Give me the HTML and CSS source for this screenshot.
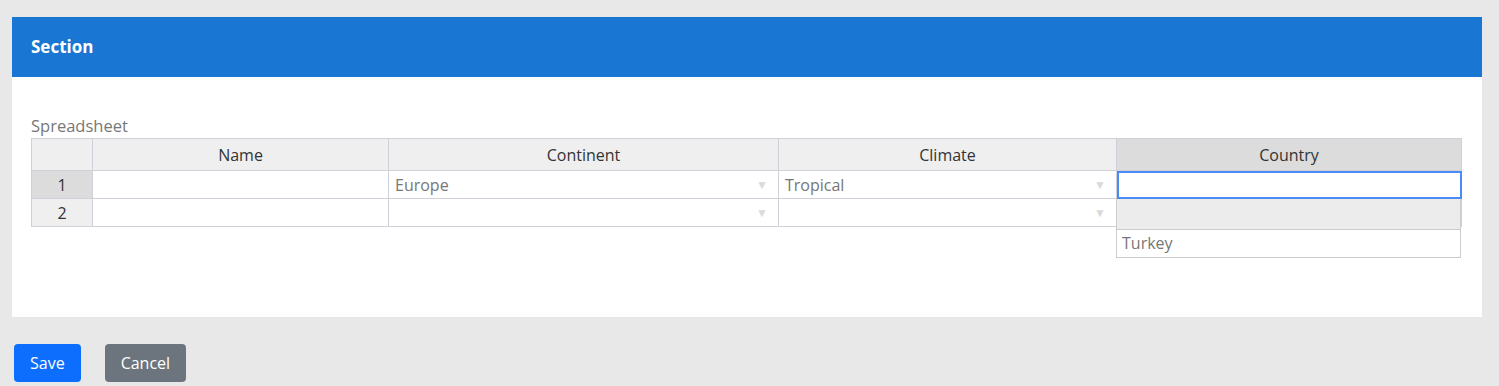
FILE: index.html
```html
<!DOCTYPE html>
<html lang="en">
<head>
  <meta charset="UTF-8">
  <meta name="viewport" content="width=device-width, initial-scale=1.0">
  <title>Section</title>
  <link rel="stylesheet" href="styles.css">
</head>
<body>
  <div class="card">
    <div class="card-header">Section</div>
    <div class="card-body">
      <div class="field-label">Spreadsheet</div>
      <table class="sheet">
        <colgroup>
          <col style="width: 61px">
          <col style="width: 296px">
          <col style="width: 390px">
          <col style="width: 338px">
          <col style="width: 345px">
        </colgroup>
        <thead>
          <tr>
            <th class="corner"></th>
            <th>Name</th>
            <th>Continent</th>
            <th>Climate</th>
            <th class="active">Country</th>
          </tr>
        </thead>
        <tbody>
          <tr>
            <td class="row-head active">1</td>
            <td></td>
            <td class="dropdown">Europe<span class="arrow">▼</span></td>
            <td class="dropdown">Tropical<span class="arrow">▼</span></td>
            <td class="selected">
              <div class="editor-list">
                <div class="editor-blank"></div>
                <div class="editor-item">Turkey</div>
              </div>
            </td>
          </tr>
          <tr>
            <td class="row-head">2</td>
            <td></td>
            <td class="dropdown"><span class="arrow">▼</span></td>
            <td class="dropdown"><span class="arrow">▼</span></td>
            <td></td>
          </tr>
        </tbody>
      </table>
    </div>
  </div>

  <div class="actions">
    <button class="btn btn-primary">Save</button>
    <button class="btn btn-secondary">Cancel</button>
  </div>
</body>
</html>
```

FILE: styles.css
```css
body {
  margin: 0;
  padding: 17px 17px 0 12px;
  background: #e8e8e8;
  font-family: 'Open Sans', 'Noto Sans', sans-serif;
  font-size: 16px;
  color: #333;
}
.card {
  width: 1470px;
  background: #fff;
}
.card-header {
  height: 60px;
  line-height: 60px;
  padding: 0 19px;
  background: #1976d2;
  color: #fff;
  font-weight: bold;
  font-size: 17px;
}
.card-body {
  padding: 38px 19px 90px;
}
.field-label {
  color: #777;
  font-size: 16.5px;
  line-height: 22px;
  margin-bottom: 1px;
}
.sheet {
  border-collapse: collapse;
  table-layout: fixed;
  width: 1430px;
}
.sheet th,
.sheet td {
  border: 1px solid #d0d0d8;
  padding: 0 6px;
  font-weight: normal;
  white-space: nowrap;
  line-height: 20px;
}
.sheet th {
  height: 31px;
  background: #efefef;
  text-align: center;
  color: #333;
}
.sheet td {
  height: 27px;
  color: #777;
  position: relative;
}
.sheet th.active,
.sheet td.active {
  background: #dcdcdc;
}
.sheet td.row-head {
  background: #efefef;
  color: #333;
  text-align: center;
}
.sheet td.row-head.active {
  background: #dcdcdc;
}
.arrow {
  position: absolute;
  right: 10px;
  top: 4px;
  font-size: 12px;
  color: #dadada;
}
.sheet td.selected {
  outline: 2px solid #4a8af4;
  outline-offset: -2px;
}
.editor-list {
  position: absolute;
  left: -1px;
  top: 28px;
  width: 343px;
  border: 1px solid #ccc;
  border-top: none;
  background: #fff;
  z-index: 2;
}
.editor-blank {
  height: 30px;
  background: #ececec;
  border-bottom: 1px solid #ccc;
}
.editor-item {
  height: 27px;
  line-height: 27px;
  padding: 0 5px;
  color: #777;
}
.actions {
  display: flex;
  gap: 24px;
  margin-top: 27px;
  padding-left: 2px;
}
.btn {
  height: 38px;
  padding: 0 16px;
  border: none;
  border-radius: 4px;
  color: #fff;
  font-family: inherit;
  font-size: 16px;
  cursor: pointer;
}
.btn-primary {
  background: #0d6efd;
}
.btn-secondary {
  background: #6c757d;
}
```
